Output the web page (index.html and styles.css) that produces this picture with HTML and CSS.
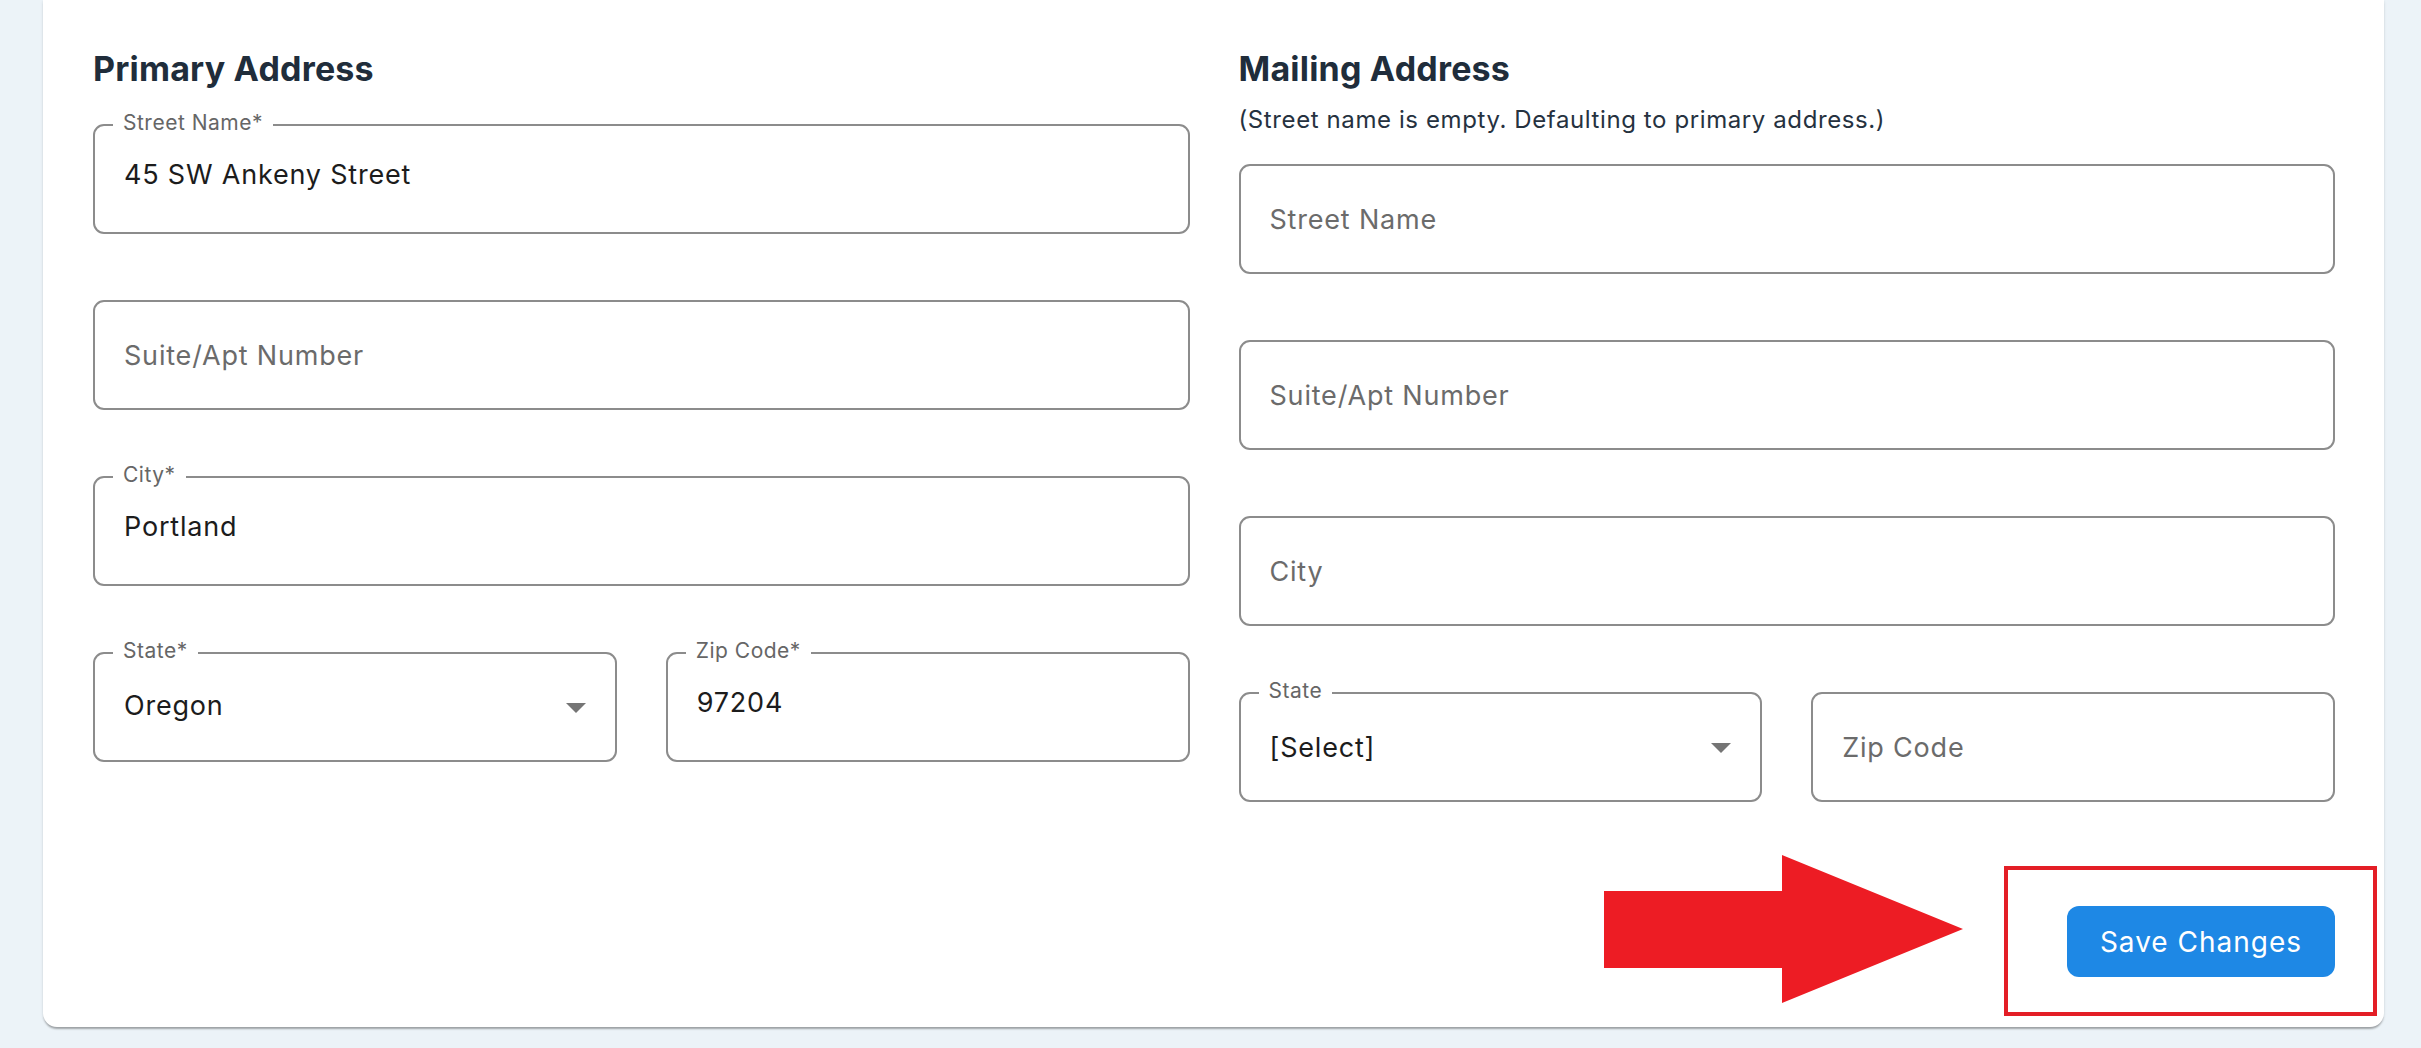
FILE: index.html
```html
<!DOCTYPE html>
<html lang="en">
<head>
<meta charset="utf-8">
<title>Address</title>
<link rel="stylesheet" href="styles.css">
</head>
<body>
<div class="page">
  <form class="card">
    <div class="columns">
      <section class="col">
        <header class="col-head">
          <h2 class="title">Primary Address</h2>
        </header>
        <div class="fields">
          <div class="field">
            <input class="control filled" type="text" value="45 SW Ankeny Street">
            <span class="label">Street Name*</span>
          </div>
          <div class="field">
            <input class="control" type="text" placeholder="Suite/Apt Number">
          </div>
          <div class="field">
            <input class="control filled" type="text" value="Portland">
            <span class="label">City*</span>
          </div>
          <div class="pair">
            <div class="field">
              <select class="control select filled-sel"><option>Oregon</option></select>
              <span class="label">State*</span>
              <svg class="caret" width="20" height="10" viewBox="0 0 20 10"><path d="M0 0h20L10 10z" fill="#757575"/></svg>
            </div>
            <div class="field">
              <input class="control filled" type="text" value="97204">
              <span class="label">Zip Code*</span>
            </div>
          </div>
        </div>
      </section>
      <section class="col">
        <header class="col-head">
          <h2 class="title">Mailing Address</h2>
          <p class="note">(Street name is empty. Defaulting to primary address.)</p>
        </header>
        <div class="fields">
          <div class="field">
            <input class="control" type="text" placeholder="Street Name">
          </div>
          <div class="field">
            <input class="control" type="text" placeholder="Suite/Apt Number">
          </div>
          <div class="field">
            <input class="control" type="text" placeholder="City">
          </div>
          <div class="pair">
            <div class="field">
              <select class="control select"><option>[Select]</option></select>
              <span class="label">State</span>
              <svg class="caret" width="20" height="10" viewBox="0 0 20 10"><path d="M0 0h20L10 10z" fill="#757575"/></svg>
            </div>
            <div class="field">
              <input class="control" type="text" placeholder="Zip Code">
            </div>
          </div>
        </div>
      </section>
    </div>
    <div class="actions">
      <button class="save" type="button">Save Changes</button>
    </div>
    <svg class="arrow" width="359" height="148" viewBox="0 0 359 148"><polygon points="0,36 178,36 178,0 359,74 178,148 178,113 0,113" fill="#ed1c24"/></svg>
    <div class="highlight"></div>
  </form>
</div>
</body>
</html>
```

FILE: styles.css
```css
* { box-sizing: border-box; }
html, body { margin: 0; padding: 0; }
body {
  background: #ecf3f8;
  font-family: Inter, "Noto Sans", sans-serif;
  width: 2421px;
  height: 1048px;
  overflow: hidden;
}
.page {
  padding: 0 37px 0 43px;
}
.card {
  position: relative;
  background: #fff;
  border-radius: 0 0 14px 14px;
  box-shadow: 0 3px 2px -1px rgba(0,0,0,0.28), 0 1px 3px rgba(0,0,0,0.12);
  padding: 49px 49px 49px 50px;
  height: 1027px;
  margin: 0;
}
.columns {
  display: grid;
  grid-template-columns: 1fr 1fr;
  column-gap: 49px;
}
.col-head {
  margin-bottom: 35px;
}
.title {
  margin: 0;
  font-size: 34px;
  line-height: 40px;
  font-weight: 700;
  color: #202d3b;
  letter-spacing: 0.2px;
}
.note {
  margin: 16px 0 -5px;
  font-size: 24px;
  line-height: 29px;
  color: #26323f;
  letter-spacing: 0.6px;
}
.fields {
  display: flex;
  flex-direction: column;
  gap: 66px;
}
.pair {
  display: grid;
  grid-template-columns: 1fr 1fr;
  column-gap: 49px;
}
.field {
  position: relative;
}
.control {
  display: block;
  width: 100%;
  height: 110px;
  margin: 0;
  border: 2px solid #8c8c8c;
  border-radius: 11px;
  background: #fff;
  padding: 0 29px;
  font-family: Inter, "Noto Sans", sans-serif;
  font-size: 27px;
  letter-spacing: 0.8px;
  color: #1c1c1c;
  outline: none;
}
.control.filled {
  padding-bottom: 9px;
}
.control.filled-sel {
  padding-bottom: 3px;
}
.control::placeholder {
  color: #6b6b6b;
  opacity: 1;
}
.select {
  appearance: none;
  -webkit-appearance: none;
  padding-right: 60px;
}
.label {
  position: absolute;
  top: -12px;
  left: 20px;
  padding: 0 10px;
  background: #fff;
  font-size: 21px;
  line-height: 21px;
  color: #666;
  letter-spacing: 0.5px;
}
.caret {
  position: absolute;
  right: 31px;
  top: 51px;
  pointer-events: none;
}
.actions {
  display: flex;
  justify-content: flex-end;
  margin-top: 104px;
}
.save {
  width: 268px;
  height: 71px;
  border: none;
  border-radius: 12px;
  background: #1e88e5;
  color: #fff;
  font-family: Inter, "Noto Sans", sans-serif;
  font-size: 28px;
  letter-spacing: 1px;
  padding: 0;
}
.arrow {
  position: absolute;
  left: 1561px;
  top: 855px;
}
.highlight {
  position: absolute;
  left: 1961px;
  top: 866px;
  width: 373px;
  height: 150px;
  border: 4px solid #e31e26;
}
```
